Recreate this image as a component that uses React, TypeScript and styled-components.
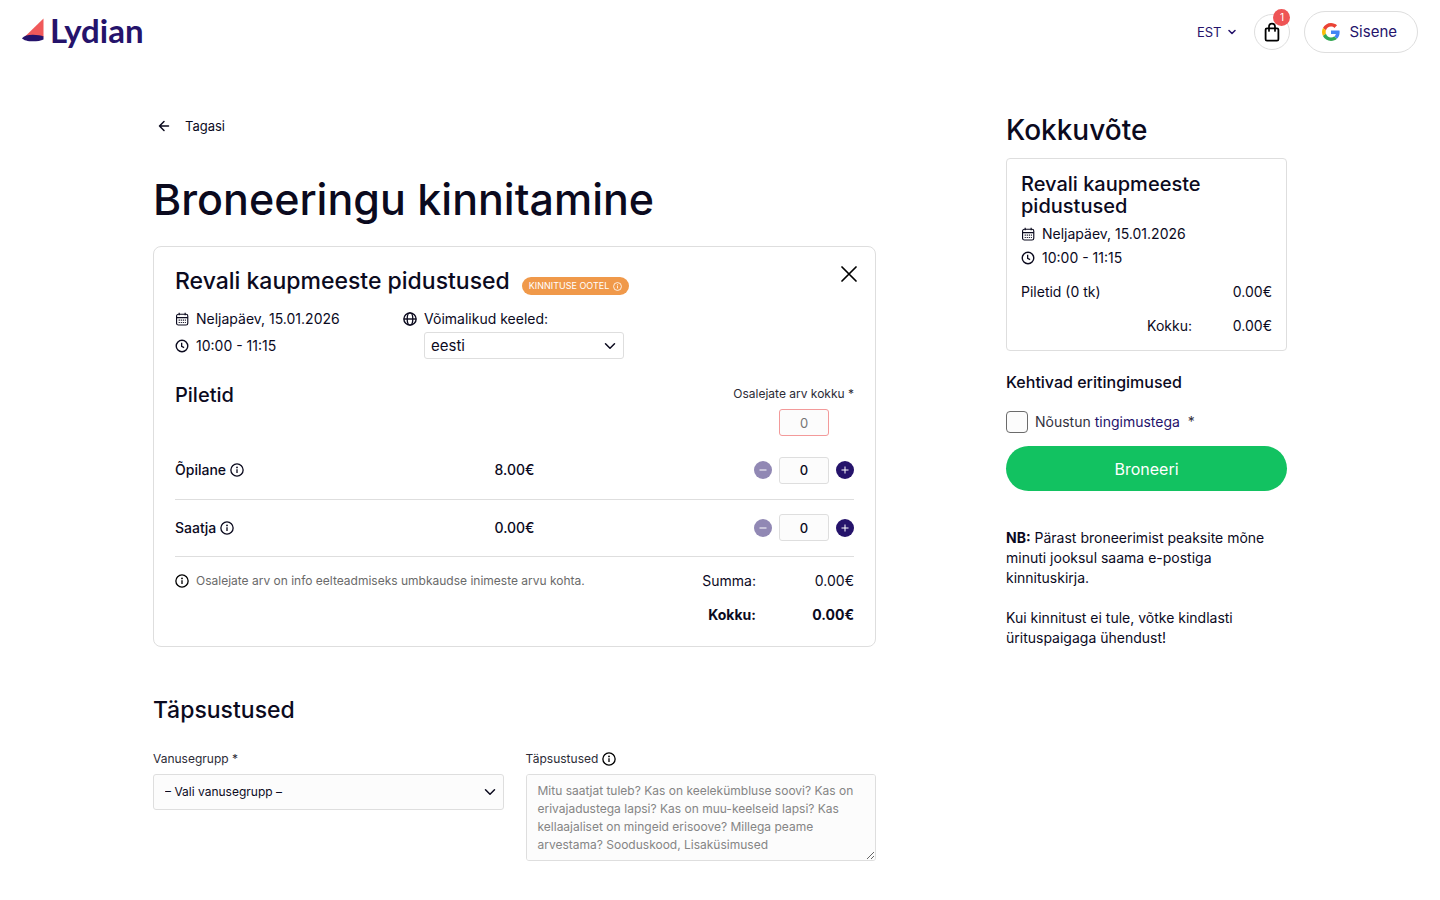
import React, { useState } from "react";
import styled, { createGlobalStyle } from "styled-components";

const ink = "#0b0a1e";
const navy = "#25136b";
const line = "#dedede";

const GlobalStyle = createGlobalStyle`
  *, *::before, *::after { box-sizing: border-box; }
  body {
    margin: 0;
    background: #fff;
    color: ${ink};
    font-family: Inter, "Liberation Sans", sans-serif;
    font-size: 14px;
    line-height: 20px;
  }
  h1, h2, h3, p, dl, dd { margin: 0; }
  h1, h2, h3 { font-weight: 500; }
  button, input, select, textarea { font: inherit; color: inherit; }
  button { cursor: pointer; }
  a { color: ${navy}; text-decoration: none; }
  svg { display: block; flex: none; }
`;

/* ---------- icons ---------- */

const Svg = styled.svg.attrs({ viewBox: "0 0 16 16", fill: "none", "aria-hidden": true })<{ $size?: number }>`
  width: ${(p) => p.$size ?? 14}px;
  height: ${(p) => p.$size ?? 14}px;
`;

const InfoIcon = ({ size = 14 }: { size?: number }) => (
  <Svg $size={size}>
    <circle cx="8" cy="8" r="7" stroke="currentColor" strokeWidth="1.5" />
    <path d="M8 7.2v4.2" stroke="currentColor" strokeWidth="1.5" />
    <circle cx="8" cy="5" r="1" fill="currentColor" />
  </Svg>
);

const CalendarIcon = () => (
  <Svg>
    <rect x="1.8" y="2.6" width="12.8" height="12.2" rx="2" stroke="currentColor" strokeWidth="1.3" />
    <path d="M1.8 6.4h12.800M4.800.8v3M11.600.8v3" stroke="currentColor" strokeWidth="1.3" />
    <path d="M4.2 9.2h8.200M4.200 12h8.200" stroke="currentColor" strokeWidth="1.4" strokeDasharray="1.3 1.05" />
  </Svg>
);

const ClockIcon = () => (
  <Svg>
    <circle cx="8" cy="8" r="6.6" stroke="currentColor" strokeWidth="1.6" />
    <path d="M7.6 4.2v4.2l2.8 1.4" stroke="currentColor" strokeWidth="1.5" />
  </Svg>
);

const GlobeIcon = () => (
  <Svg>
    <circle cx="8" cy="8" r="7" stroke="currentColor" strokeWidth="1.6" />
    <ellipse cx="8" cy="8" rx="3.2" ry="7" stroke="currentColor" strokeWidth="1.5" />
    <path d="M1 8h14" stroke="currentColor" strokeWidth="1.6" />
  </Svg>
);

const ChevronIcon = ({ size = 12, stroke = 2 }: { size?: number; stroke?: number }) => (
  <Svg $size={size}>
    <path d="M2 5l6 6 6-6" stroke="currentColor" strokeWidth={stroke} strokeLinecap="round" strokeLinejoin="round" />
  </Svg>
);

const BackIcon = () => (
  <Svg $size={12}>
    <path d="M14 8H2M8 2L2 8l6 6" stroke="currentColor" strokeWidth="2" strokeLinecap="round" strokeLinejoin="round" />
  </Svg>
);

const CloseIcon = () => (
  <Svg $size={16}>
    <path d="M1 1l14 14M15 1L1 15" stroke="currentColor" strokeWidth="1.7" strokeLinecap="round" />
  </Svg>
);

const BagIcon = () => (
  <svg width="16" height="20" viewBox="0 0 16 20" fill="none" aria-hidden="true">
    <rect x="1.6" y="6.4" width="12.8" height="12.2" rx="1.4" stroke="#000" strokeWidth="1.8" />
    <path d="M5 9V4.6C5 2.8 6.200 1.600 8 1.600s3 1.200 3 3V9" stroke="#000" strokeWidth="1.700" strokeLinecap="round" />
  </svg>
);

const GoogleIcon = () => (
  <svg width="18" height="18" viewBox="0 0 48 48" aria-hidden="true">
    <path fill="#EA4335" d="M24 9.5c3.54 0 6.71 1.22 9.21 3.6l6.85-6.85C35.9 2.38 30.47 0 24 0 14.62 0 6.51 5.38 2.56 13.22l7.98 6.19C12.43 13.72 17.74 9.5 24 9.5z" />
    <path fill="#4285F4" d="M46.98 24.55c0-1.57-.15-3.09-.38-4.55H24v9.02h12.94c-.58 2.96-2.26 5.48-4.78 7.18l7.73 6c4.51-4.18 7.09-10.36 7.09-17.65z" />
    <path fill="#FBBC05" d="M10.53 28.59c-.48-1.45-.76-2.99-.76-4.59s.27-3.14.76-4.59l-7.98-6.19C.92 16.46 0 20.12 0 24c0 3.88.92 7.54 2.56 10.78l7.97-6.19z" />
    <path fill="#34A853" d="M24 48c6.48 0 11.93-2.13 15.89-5.81l-7.73-6c-2.15 1.45-4.92 2.3-8.16 2.3-6.26 0-11.57-4.22-13.47-9.91l-7.98 6.19C6.51 42.62 14.62 48 24 48z" />
  </svg>
);

const LogoMark = () => (
  <svg width="22" height="24" viewBox="0 0 22 24" aria-hidden="true">
    <path d="M21.500.5v18.500H2.500z" fill="#f0595a" />
    <path d="M0 20.200c1.800-2.300 6-3.400 10.800-3.400 4.400 0 8.600.7 10.700 1.800v2.800c-2.500 1.200-6.500 1.900-10.700 1.900C6 23.300 1.600 22.300 0 20.200z" fill={navy} />
  </svg>
);

/* ---------- header ---------- */

const Header = styled.header`
  display: flex;
  align-items: center;
  justify-content: space-between;
  height: 64px;
  padding: 0 22px;
`;

const Logo = styled.a`
  display: flex;
  align-items: center;
  gap: 6px;
  margin-bottom: 4px;
  font-family: Lato, Inter, sans-serif;
  font-size: 33px;
  line-height: 36px;
  font-weight: 700;
`;

const Tools = styled.nav`
  display: flex;
  align-items: center;
`;

const Language = styled.button`
  display: flex;
  align-items: center;
  gap: 7px;
  padding: 0;
  margin-right: 18px;
  border: 0;
  background: none;
  color: ${navy};
  font-size: 13px;
`;

const Cart = styled.button`
  position: relative;
  display: grid;
  place-items: center;
  width: 36px;
  height: 36px;
  padding: 0;
  margin-right: 14px;
  border: 1px solid ${line};
  border-radius: 50%;
  background: #fff;
`;

const CartCount = styled.span`
  position: absolute;
  top: -6px;
  right: -1px;
  width: 17px;
  height: 17px;
  border-radius: 50%;
  background: #ee5455;
  color: #fff;
  font-size: 10px;
  line-height: 17px;
  text-align: center;
`;

const SignIn = styled.button`
  display: flex;
  align-items: center;
  gap: 9px;
  height: 42px;
  padding: 0 20px 0 17px;
  border: 1px solid ${line};
  border-radius: 21px;
  background: #fff;
  color: ${navy};
  font-size: 15px;
`;

/* ---------- page ---------- */

const Page = styled.main`
  display: grid;
  grid-template-columns: minmax(0, 723fr) minmax(0, 281fr);
  column-gap: 130px;
  align-items: start;
  max-width: 1182px;
  margin: 0 auto;
  padding: 52px 24px 39px;
`;

const Back = styled.a`
  display: inline-flex;
  align-items: center;
  gap: 15px;
  padding-left: 5px;
  color: ${ink};
  font-size: 13px;
`;

const PageTitle = styled.h1`
  margin: 34px 0 19px;
  font-size: 43px;
  line-height: 56px;
`;

const Card = styled.section`
  padding: 18px 21px 21px;
  border: 1px solid ${line};
  border-radius: 8px;
`;

const CardHead = styled.div`
  display: flex;
  align-items: center;
  gap: 12px;
  height: 32px;
`;

const Title = styled.h2`
  font-size: 23px;
  line-height: 32px;
`;

const Badge = styled.span`
  display: flex;
  align-items: center;
  gap: 4px;
  height: 18px;
  padding: 0 7px;
  margin-top: 10px;
  border-radius: 9px;
  background: #f0994a;
  color: #fff;
  font-size: 9px;
  line-height: 18px;
`;

const Close = styled.button`
  display: flex;
  padding: 0;
  margin: -14px -3px 0 auto;
  border: 0;
  background: none;
  color: #000;
`;

const Details = styled.div`
  display: grid;
  grid-template-columns: 228px 1fr;
  margin-top: 8px;
`;

const IconLine = styled.div`
  display: flex;
  align-items: center;
  gap: 7px;
  height: 27px;
`;

const SummaryLines = styled.div`
  margin-bottom: 12px;
  ${IconLine} { height: 24px; }
`;

const LanguageField = styled.div`
  & > div:last-child { margin-left: 21px; }
`;

const SelectWrap = styled.div<{ $large?: boolean }>`
  display: grid;
  align-items: center;
  width: ${(p) => (p.$large ? "auto" : "200px")};
  & > * { grid-area: 1 / 1; }
  & > svg { justify-self: end; margin-right: 8px; pointer-events: none; }
`;

const Select = styled.select<{ $large?: boolean }>`
  appearance: none;
  width: 100%;
  height: ${(p) => (p.$large ? 36 : 27)}px;
  padding: 0 ${(p) => (p.$large ? 11 : 6)}px;
  border: 1px solid ${line};
  border-radius: 3px;
  background: ${(p) => (p.$large ? "#fcfcfc" : "#fff")};
  font-size: ${(p) => (p.$large ? 12 : 15)}px;
`;

const TicketsHead = styled.div`
  display: flex;
  justify-content: space-between;
  margin-top: 25px;
`;

const Subtitle = styled.h3`
  font-size: 20px;
  line-height: 22px;
`;

const TotalField = styled.div`
  display: flex;
  flex-direction: column;
  align-items: flex-end;
  gap: 5px;
  color: #2c2b36;
  font-size: 12px;
  & > input { margin-right: 25px; }
`;

const Count = styled.input<{ $invalid?: boolean }>`
  width: 50px;
  height: 27px;
  padding: 0;
  border: 1px solid ${(p) => (p.$invalid ? "#f39a9a" : line)};
  border-radius: 3px;
  background: #fcfcfc;
  font-size: 13px;
  font-weight: ${(p) => (p.$invalid ? 400 : 500)};
  text-align: center;
  &::placeholder { color: #757575; opacity: 1; }
`;

const Tickets = styled.table`
  width: 100%;
  margin-top: 6px;
  border-collapse: collapse;
  table-layout: fixed;
  font-weight: 500;
  th, td {
    height: 57px;
    padding: 0;
    border-bottom: 1px solid ${line};
    font-weight: 500;
    text-align: center;
  }
`;

const TicketName = styled.div`
  display: flex;
  align-items: center;
  gap: 4px;
`;

const Stepper = styled.div`
  display: flex;
  align-items: center;
  justify-content: flex-end;
  gap: 7px;
`;

const Step = styled.button`
  display: grid;
  place-items: center;
  width: 18px;
  height: 18px;
  padding: 0;
  border: 0;
  border-radius: 50%;
  background: ${navy};
  color: #fff;
  &:disabled { opacity: 0.5; cursor: default; }
`;

const CardFoot = styled.div`
  display: flex;
  justify-content: space-between;
  padding-top: 14px;
`;

const Note = styled.p`
  display: flex;
  align-items: center;
  gap: 7px;
  height: 20px;
  color: #6a6a6a;
  font-size: 12px;
  svg { color: #000; }
`;

const Totals = styled.dl`
  display: grid;
  grid-template-columns: auto 98px;
  row-gap: 14px;
  text-align: right;
`;

const Term = styled.dt<{ $bold?: boolean }>`
  font-weight: ${(p) => (p.$bold ? 700 : 400)};
`;

const Amount = styled.dd<{ $bold?: boolean }>`
  font-weight: ${(p) => (p.$bold ? 700 : 400)};
`;

const Specs = styled.section`
  margin-top: 47px;
`;

const Fields = styled.div`
  display: grid;
  grid-template-columns: 1fr 1fr;
  column-gap: 22px;
  align-items: start;
  margin-top: 23px;
`;

const Field = styled.div`
  display: flex;
  flex-direction: column;
  gap: 5px;
`;

const Label = styled.label`
  display: flex;
  align-items: center;
  gap: 4px;
  color: #2c2b36;
  font-size: 12px;
  svg { color: #000; }
`;

const TextArea = styled.textarea`
  display: block;
  width: 100%;
  height: 87px;
  padding: 7px 11px;
  border: 1px solid ${line};
  border-radius: 3px;
  background: #fcfcfc;
  font-size: 12px;
  line-height: 18px;
  resize: vertical;
  &::placeholder { color: #858585; opacity: 1; }
`;

/* ---------- summary ---------- */

const Aside = styled.aside`
  display: flex;
  flex-direction: column;
`;

const AsideTitle = styled.h2`
  margin-bottom: 14px;
  font-size: 28px;
  line-height: 28px;
`;

const Summary = styled.section`
  padding: 14px;
  border: 1px solid ${line};
  border-radius: 4px;
`;

const SummaryTitle = styled.h3`
  margin-bottom: 5px;
  font-size: 20px;
  line-height: 22px;
`;

const SumLines = styled.dl`
  display: grid;
  grid-template-columns: 1fr 80px;
  row-gap: 14px;
  dd { text-align: right; }
  dt:last-of-type { text-align: right; }
`;

const Terms = styled.h3`
  margin-top: 20px;
  font-size: 16px;
  line-height: 22px;
`;

const Agree = styled.label`
  display: flex;
  align-items: center;
  gap: 7px;
  margin: 18px 0 13px;
  color: #33323e;
`;

const Check = styled.input`
  appearance: none;
  width: 22px;
  height: 22px;
  margin: 0;
  border: 1px solid #6b6b6b;
  border-radius: 4px;
  background: #fcfcfc;
  &:checked { background: ${navy}; }
`;

const Submit = styled.button`
  height: 45px;
  border: 0;
  border-radius: 23px;
  background: #12c261;
  color: #fff;
  font-size: 16px;
`;

const Notice = styled.p`
  margin-top: 37px;
  & + & { margin-top: 20px; }
`;

const DateTime = () => (
  <>
    <IconLine><CalendarIcon />Neljapäev, 15.01.2026</IconLine>
    <IconLine><ClockIcon />10:00 - 11:15</IconLine>
  </>
);

function TicketRow({ name, price }: { name: string; price: string }) {
  const [count, setCount] = useState(0);
  return (
    <tr>
      <th scope="row"><TicketName>{name}<InfoIcon /></TicketName></th>
      <td>{price}</td>
      <td>
        <Stepper>
          <Step type="button" aria-label={`Vähenda: ${name}`} disabled={count === 0} onClick={() => setCount(count - 1)}>
            <Svg $size={8}><path d="M1 8h14" stroke="currentColor" strokeWidth="2" /></Svg>
          </Step>
          <Count
            inputMode="numeric"
            aria-label={name}
            value={count}
            onChange={(e) => setCount(Number(e.target.value.replace(/\D/g, "")))}
          />
          <Step type="button" aria-label={`Lisa: ${name}`} onClick={() => setCount(count + 1)}>
            <Svg $size={8}><path d="M1 8h14M8 1v14" stroke="currentColor" strokeWidth="2" /></Svg>
          </Step>
        </Stepper>
      </td>
    </tr>
  );
}

export default function App() {
  return (
    <>
      <GlobalStyle />
      <Header>
        <Logo href="#"><LogoMark />Lydian</Logo>
        <Tools>
          <Language type="button">EST<ChevronIcon size={8} stroke={3} /></Language>
          <Cart type="button" aria-label="Ostukorv"><BagIcon /><CartCount>1</CartCount></Cart>
          <SignIn type="button"><GoogleIcon />Sisene</SignIn>
        </Tools>
      </Header>

      <Page>
        <div>
          <Back href="#"><BackIcon />Tagasi</Back>
          <PageTitle>Broneeringu kinnitamine</PageTitle>

          <Card>
            <CardHead>
              <Title>Revali kaupmeeste pidustused</Title>
              <Badge>KINNITUSE OOTEL<InfoIcon size={9} /></Badge>
              <Close type="button" aria-label="Sulge"><CloseIcon /></Close>
            </CardHead>

            <Details>
              <div><DateTime /></div>
              <LanguageField>
                <IconLine><GlobeIcon /><label htmlFor="lang">Võimalikud keeled:</label></IconLine>
                <SelectWrap>
                  <Select id="lang"><option>eesti</option></Select>
                  <ChevronIcon />
                </SelectWrap>
              </LanguageField>
            </Details>

            <TicketsHead>
              <Subtitle>Piletid</Subtitle>
              <TotalField>
                <label htmlFor="total">Osalejate arv kokku *</label>
                <Count id="total" inputMode="numeric" placeholder="0" $invalid />
              </TotalField>
            </TicketsHead>

            <Tickets>
              <tbody>
                <TicketRow name="Õpilane" price="8.00€" />
                <TicketRow name="Saatja" price="0.00€" />
              </tbody>
            </Tickets>

            <CardFoot>
              <Note><InfoIcon />Osalejate arv on info eelteadmiseks umbkaudse inimeste arvu kohta.</Note>
              <Totals>
                <Term>Summa:</Term>
                <Amount>0.00€</Amount>
                <Term $bold>Kokku:</Term>
                <Amount $bold>0.00€</Amount>
              </Totals>
            </CardFoot>
          </Card>

          <Specs>
            <Title>Täpsustused</Title>
            <Fields>
              <Field>
                <Label htmlFor="age">Vanusegrupp *</Label>
                <SelectWrap $large>
                  <Select id="age" $large><option>– Vali vanusegrupp –</option></Select>
                  <ChevronIcon />
                </SelectWrap>
              </Field>
              <Field>
                <Label htmlFor="specs">Täpsustused<InfoIcon /></Label>
                <TextArea
                  id="specs"
                  placeholder="Mitu saatjat tuleb? Kas on keelekümbluse soovi? Kas on erivajadustega lapsi? Kas on muu-keelseid lapsi? Kas kellaajaliset on mingeid erisoove? Millega peame arvestama? Sooduskood, Lisaküsimused"
                />
              </Field>
            </Fields>
          </Specs>
        </div>

        <Aside>
          <AsideTitle>Kokkuvõte</AsideTitle>
          <Summary>
            <SummaryTitle>Revali kaupmeeste pidustused</SummaryTitle>
            <SummaryLines><DateTime /></SummaryLines>
            <SumLines>
              <dt>Piletid (0 tk)</dt>
              <dd>0.00€</dd>
              <dt>Kokku:</dt>
              <dd>0.00€</dd>
            </SumLines>
          </Summary>

          <Terms>Kehtivad eritingimused</Terms>
          <Agree>
            <Check type="checkbox" />
            <span>Nõustun <a href="#">tingimustega</a>{"\u00a0 *"}</span>
          </Agree>
          <Submit type="button">Broneeri</Submit>

          <Notice><b>NB:</b> Pärast broneerimist peaksite mõne minuti jooksul saama e-postiga kinnituskirja.</Notice>
          <Notice>Kui kinnitust ei tule, võtke kindlasti ürituspaigaga ühendust!</Notice>
        </Aside>
      </Page>
    </>
  );
}
